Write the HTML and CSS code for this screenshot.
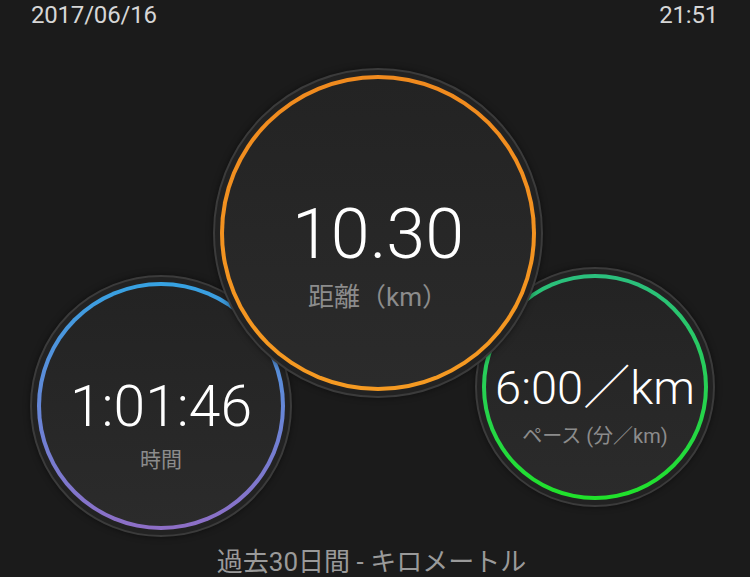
FILE: index.html
```html
<!DOCTYPE html>
<html lang="ja">
<head>
    <meta charset="UTF-8">
    <title>ランニング記録</title>
    <link rel="stylesheet" href="styles.css">
</head>
<body>
    <header class="topbar">
        <span class="date">2017/06/16</span>
        <span class="time">21:51</span>
    </header>

    <main class="stage">
        <div class="disc disc-time">
            <div class="ring">
                <div class="face">
                    <div class="value">1:01:46</div>
                    <div class="label">時間</div>
                </div>
            </div>
        </div>

        <div class="disc disc-pace">
            <div class="ring">
                <div class="face">
                    <div class="value">6:00／km</div>
                    <div class="label">ペース (分／km)</div>
                </div>
            </div>
        </div>

        <div class="disc disc-distance">
            <div class="ring">
                <div class="face">
                    <div class="value">10.30</div>
                    <div class="label">距離（km）</div>
                </div>
            </div>
        </div>
    </main>

    <footer class="caption">過去30日間 - キロメートル</footer>
</body>
</html>
```

FILE: styles.css
```css
body {
    margin: 0;
    width: 750px;
    height: 577px;
    overflow: hidden;
    background-color: #1b1b1b;
    color: #fff;
    font-family: Roboto, "Noto Sans CJK JP", sans-serif;
}

.topbar {
    display: flex;
    justify-content: space-between;
    box-sizing: border-box;
    height: 30px;
    padding: 3px 32px 0 31px;
    font-size: 24px;
    line-height: 24px;
    color: #d6d6d6;
    letter-spacing: -0.2px;
}

/* circles sit on a free canvas and overlap */
.stage {
    position: relative;
    height: 515px;
}

.disc {
    position: absolute;
    box-sizing: border-box;
    border-radius: 50%;
    border: 2px solid #3b3b3b;
    background-color: #222;
    padding: 5px;
    box-shadow: 0 0 6px rgba(0, 0, 0, 0.5);
}

.ring {
    width: 100%;
    height: 100%;
    box-sizing: border-box;
    border-radius: 50%;
    padding: 4px;
}

.face {
    width: 100%;
    height: 100%;
    box-sizing: border-box;
    border-radius: 50%;
    background: linear-gradient(#232323, #2b2b2b);
    display: flex;
    flex-direction: column;
    align-items: center;
    justify-content: center;
}

.value {
    font-weight: 300;
    line-height: 1;
    white-space: nowrap;
}

.label {
    color: #8c8c8c;
    white-space: nowrap;
    line-height: 1;
}

.disc-distance {
    left: 213px;
    top: 38px;
    width: 330px;
    height: 330px;
    z-index: 2;
}

.disc-distance .ring {
    background: linear-gradient(#f08a1e, #f59a22);
}

.disc-distance .face {
    padding-top: 42px;
}

.disc-distance .value {
    font-size: 70px;
}

.disc-distance .label {
    font-size: 26px;
    margin-top: 15px;
}

.disc-time {
    left: 30px;
    top: 245px;
    width: 262px;
    height: 262px;
    z-index: 1;
}

.disc-time .ring {
    background: linear-gradient(#36a2e2, #6a84d6 55%, #8e6ec6);
}

.disc-time .face {
    padding-top: 36px;
}

.disc-time .value {
    font-size: 57px;
}

.disc-time .label {
    font-size: 21px;
    margin-top: 15px;
}

.disc-pace {
    left: 475px;
    top: 237px;
    width: 240px;
    height: 240px;
    z-index: 1;
}

.disc-pace .ring {
    background: linear-gradient(#2bbf7e, #27d054 50%, #20e22a);
}

.disc-pace .face {
    padding-top: 35px;
}

.disc-pace .value {
    font-size: 47px;
}

.disc-pace .label {
    font-size: 20px;
    margin-top: 15px;
}

.caption {
    text-align: center;
    font-size: 26px;
    line-height: 26px;
    color: #9a9a9a;
    margin-left: -7px;
    padding-top: 4px;
}
```
